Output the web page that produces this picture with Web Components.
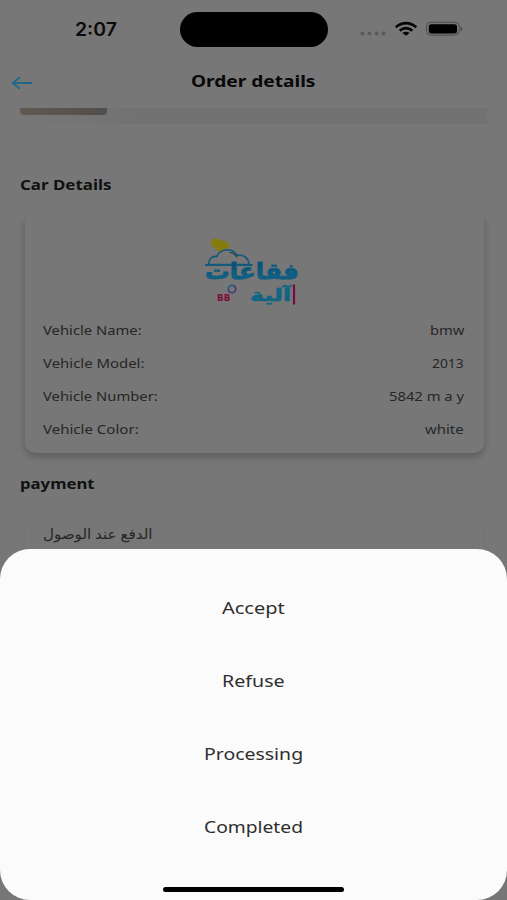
<!DOCTYPE html>
<html lang="en">
<head>
<meta charset="utf-8">
<meta name="viewport" content="width=device-width, initial-scale=1">
<title>Order details</title>
<style>
  body {
    margin: 0;
    background: #777;
    font-family: "Noto Sans", "DejaVu Sans", sans-serif;
  }
</style>
</head>
<body>
<order-screen></order-screen>

<script>
// One line of text, stretched sideways to the width in its "w" attribute
class FitText extends HTMLElement {
  constructor() {
    super();
    this.attachShadow({ mode: 'open' });
    this.shadowRoot.innerHTML = `
      <style>
        :host { display: block; white-space: nowrap; flex: none; }
        span { display: inline-block; transform-origin: 0 50%; }
      </style>
      <span><slot></slot></span>
    `;
  }

  connectedCallback() {
    const width = Number(this.getAttribute('w'));
    const span = this.shadowRoot.querySelector('span');
    this.style.width = width + 'px';
    span.style.transform = `scaleX(${width / span.offsetWidth})`;
  }
}

class StatusBar extends HTMLElement {
  constructor() {
    super();
    this.attachShadow({ mode: 'open' });
    this.shadowRoot.innerHTML = `
      <style>
        :host {
          display: flex;
          height: 58px;
          box-sizing: border-box;
          padding: 12px 40px 0 75px;
          color: #0b0b0b;
        }
        fit-text {
          font: 600 18px/35px Inter, sans-serif;
        }
        .island {
          width: 148px;
          height: 35px;
          flex: none;
          margin-left: 63px;
          border-radius: 18px;
          background: #000;
        }
        svg { flex: none; margin-left: 31px; }
      </style>
      <fit-text w="42">2:07</fit-text>
      <div class="island"></div>
      <svg width="106" height="35" viewBox="359 12 106 35">
        <g fill="#5a5a5a">
          <circle cx="362.3" cy="33.5" r="1.9"/><circle cx="369.5" cy="33.5" r="1.9"/>
          <circle cx="376.6" cy="33.5" r="1.9"/><circle cx="383.5" cy="33.5" r="1.9"/>
        </g>
        <g fill="none" stroke="#050505" stroke-width="2.6">
          <path d="M395.7 27.2Q406 19 416.3 27.2"/>
          <path d="M399.7 30.6Q406 25.8 412.3 30.6"/>
        </g>
        <path d="M402.4 33Q406 30.3 409.6 33L406 35.8Z" fill="#050505"/>
        <rect x="426.6" y="22.3" width="32.6" height="12.8" rx="4" fill="none" stroke="#4c4c4c"/>
        <rect x="428.8" y="24.2" width="28.2" height="9.2" rx="2.5" fill="#000"/>
        <path d="M461 26.7q1.8 2 0 4.2z" fill="#333" stroke="#444" stroke-width=".6"/>
      </svg>
    `;
  }
}

class NavBar extends HTMLElement {
  constructor() {
    super();
    this.attachShadow({ mode: 'open' });
    this.shadowRoot.innerHTML = `
      <style>
        :host { display: flex; height: 50px; padding-left: 11px; color: #080808; }
        svg { margin-top: 17px; }
        fit-text { margin-left: 158px; font-size: 16.5px; font-weight: 700; line-height: 46px; }
      </style>
      <svg width="22" height="16" fill="none" stroke="#1d6a86" stroke-width="1.8">
        <path d="M21 8H1.2M9 2.2L1.5 8L9 13.8"/>
      </svg>
      <fit-text w="125"><slot></slot></fit-text>
    `;
  }
}

class BrandLogo extends HTMLElement {
  constructor() {
    super();
    this.attachShadow({ mode: 'open' });
    this.shadowRoot.innerHTML = `
      <style>
        :host { display: block; width: 100px; height: 72px; }
        svg { display: block; overflow: visible; }
        text { font-family: "DejaVu Sans", sans-serif; font-weight: 700; }
      </style>
      <svg width="100" height="72" viewBox="203 236 100 72">
        <defs>
          <linearGradient id="blue" x1="0" y1="0" x2="0" y2="1">
            <stop offset="0" stop-color="#0b4670"/>
            <stop offset="1" stop-color="#126c8c"/>
          </linearGradient>
        </defs>
        <path d="M211.5 240l4-2 5 2.5 6 1 4 5-5 2.5-7 3-2.5-3-5-4.5z" fill="#857b0c"/>
        <path d="M209 264.5c-1-5 3-9 8-8 2-7 15-10 20-1 6-2 12 3 12 9z" fill="#777" stroke="#13597c" stroke-width="1.7"/>
        <path d="M229.5 252.5q5 0 7.500 5" fill="none" stroke="#27424b" stroke-width="1.2"/>
        <path d="M205 265H252.5" stroke="#13597c" stroke-width="2"/>
        <text x="205" y="279" font-size="22" textLength="94" lengthAdjust="spacingAndGlyphs" direction="rtl" text-anchor="end" fill="url(#blue)" stroke="#105d80" stroke-width=".8">فقاعات</text>
        <text x="250" y="300.5" font-size="17" textLength="41" lengthAdjust="spacingAndGlyphs" direction="rtl" text-anchor="end" fill="#126584" stroke="#126584" stroke-width=".6">آلية</text>
        <path d="M294 284.5V304.5" stroke="#760b42" stroke-width="2.2"/>
        <circle cx="232" cy="289" r="3.7" fill="#777" stroke="#463873" stroke-width="1.7"/>
        <path d="M228.3 289a3.7 3.7 0 0 1 5-3.5" fill="none" stroke="#287086" stroke-width="1.7"/>
        <text x="217" y="300.5" font-size="8" textLength="13.5" lengthAdjust="spacingAndGlyphs" fill="#7b0e3c">BB</text>
      </svg>
    `;
  }
}

class DetailRow extends HTMLElement {
  constructor() {
    super();
    this.attachShadow({ mode: 'open' });
    this.shadowRoot.innerHTML = `
      <style>
        :host {
          display: flex;
          justify-content: space-between;
          height: 32.9px;
          font-size: 13px;
          line-height: 32px;
          color: #262626;
        }
      </style>
      <slot name="label"></slot>
      <slot name="value"></slot>
    `;
  }
}

class ActionSheet extends HTMLElement {
  constructor() {
    super();
    this.attachShadow({ mode: 'open' });
    this.shadowRoot.innerHTML = `
      <style>
        :host {
          display: flex;
          flex-direction: column;
          align-items: center;
          box-sizing: border-box;
          height: 351px;
          padding-top: 22px;
          border-radius: 30px;
          background: #fbfbfb;
          color: #2e2e2e;
          font-size: 16.5px;
          line-height: 73.1px;
        }
        .home { width: 181px; height: 5px; margin-top: 23.6px; border-radius: 3px; background: #000; }
      </style>
      <slot></slot>
      <div class="home"></div>
    `;
  }
}

class OrderScreen extends HTMLElement {
  constructor() {
    super();
    this.attachShadow({ mode: 'open' });
    this.shadowRoot.innerHTML = `
      <style>
        :host { display: block; width: 507px; height: 900px; overflow: hidden; }
        .page { height: 549px; overflow: hidden; }
        .previous {
          height: 16px;
          margin: 0 20px 51px;
          background: linear-gradient(90deg, #777, #727272 25%);
        }
        .photo {
          width: 87px;
          height: 7px;
          border-radius: 0 0 4px 4px;
          background: linear-gradient(90deg, #625850, #514e4b);
        }
        .heading { margin-left: 20px; font-size: 14.5px; font-weight: 700; line-height: 18px; color: #111; }
        /* the clip hides the upper edge of the card's shadow */
        .clip { height: 256px; margin-top: 24px; overflow: hidden; }
        .card {
          height: 236px;
          box-sizing: border-box;
          margin: 0 23px 0 25px;
          padding: 19px 20.5px 0 18px;
          border-radius: 0 0 10px 10px;
          background: #777;
          box-shadow: 0 4px 7px rgba(0, 0, 0, .22);
        }
        brand-logo { margin: 0 auto 6px 160px; }
        .more { margin-top: 1px; }
        .payment {
          margin: 29px 23px 0 25px;
          padding-left: 18px;
          height: 40px;
          background: #777;
          box-shadow: 0 3px 4px rgba(0, 0, 0, .06);
          font-size: 14px;
          line-height: 25px;
          color: #262626;
        }
      </style>
      <div class="page">
        <status-bar></status-bar>
        <nav-bar>Order details</nav-bar>
        <div class="previous"><div class="photo"></div></div>
        <fit-text class="heading" w="91">Car Details</fit-text>
        <div class="clip">
          <div class="card">
            <brand-logo></brand-logo>
            <detail-row><fit-text slot="label" w="99">Vehicle Name:</fit-text><fit-text slot="value" w="34">bmw</fit-text></detail-row>
            <detail-row><fit-text slot="label" w="101">Vehicle Model:</fit-text><fit-text slot="value" w="32">2013</fit-text></detail-row>
            <detail-row><fit-text slot="label" w="115">Vehicle Number:</fit-text><fit-text slot="value" w="75">5842 m a y</fit-text></detail-row>
            <detail-row><fit-text slot="label" w="96">Vehicle Color:</fit-text><fit-text slot="value" w="39">white</fit-text></detail-row>
          </div>
        </div>
        <fit-text class="heading more" w="75">payment</fit-text>
        <div class="payment"><fit-text w="110" lang="ar">الدفع عند الوصول</fit-text></div>
      </div>
      <action-sheet>
        <fit-text w="63">Accept</fit-text>
        <fit-text w="63">Refuse</fit-text>
        <fit-text w="99">Processing</fit-text>
        <fit-text w="99">Completed</fit-text>
      </action-sheet>
    `;
  }
}

customElements.define('status-bar', StatusBar);
customElements.define('nav-bar', NavBar);
customElements.define('brand-logo', BrandLogo);
customElements.define('detail-row', DetailRow);
customElements.define('action-sheet', ActionSheet);
customElements.define('order-screen', OrderScreen);
// Defined last, so that the text is already in its place when it is measured
customElements.define('fit-text', FitText);
</script>
</body>
</html>
